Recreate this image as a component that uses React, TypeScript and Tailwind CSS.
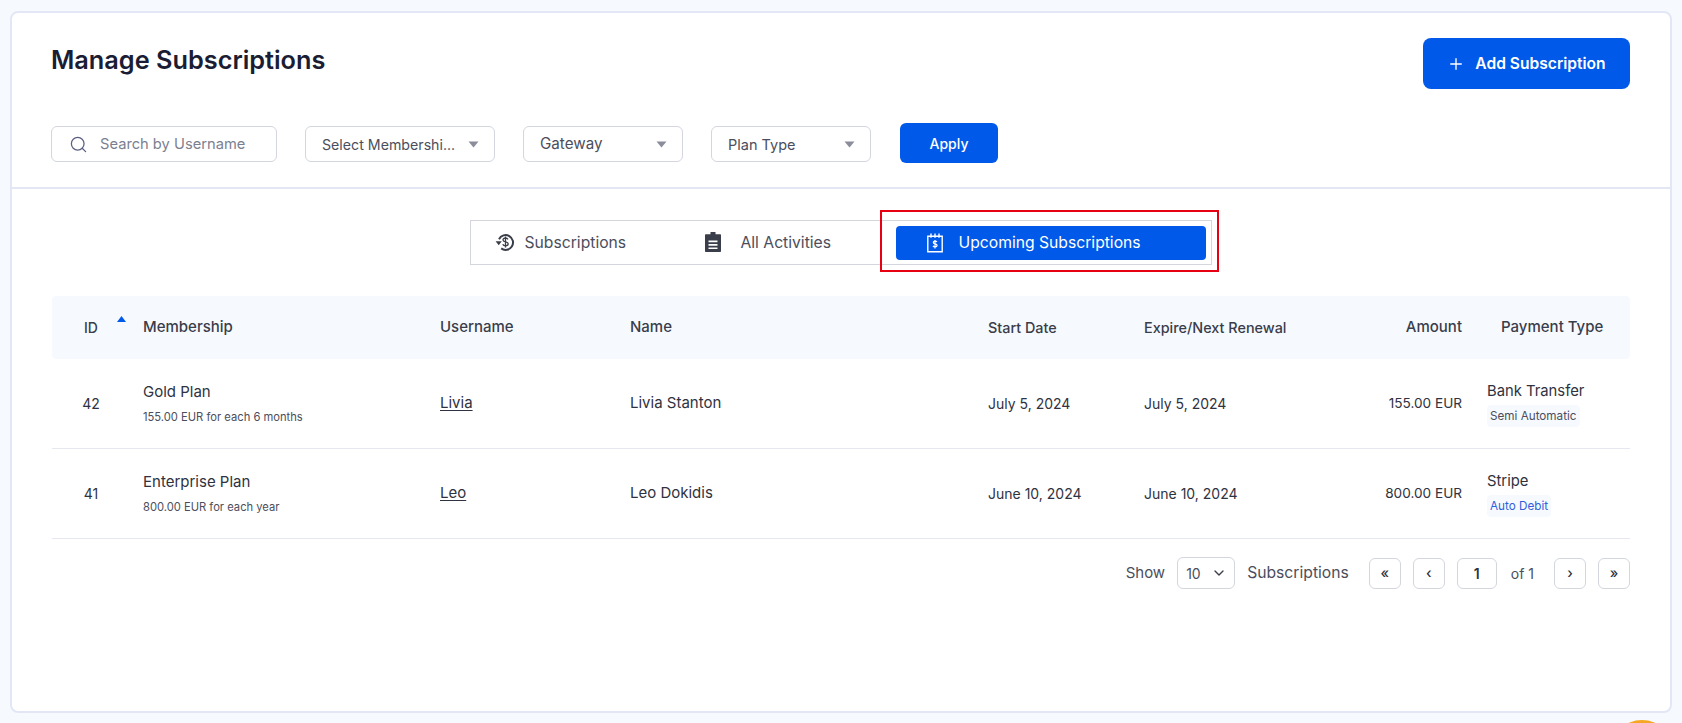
import { ChevronDown, Plus, Search } from 'lucide-react';

const font = "font-['Inter',sans-serif]";

function Caret() {
  return (
    <svg width="11" height="7" viewBox="0 0 11 7" className="shrink-0 text-[#8b8d9b]">
      <path d="M0.5 0.5h10L5.5 6.5z" fill="currentColor" />
    </svg>
  );
}

function FilterSelect({ label, width, size }: { label: string; width: string; size: string }) {
  return (
    <div className={`flex h-9 items-center justify-between rounded-md border border-[#d4d6de] bg-white pl-4 pr-[15px] text-[#4b4e5c] ${width} ${size}`}>
      <span className="pt-px">{label}</span>
      <Caret />
    </div>
  );
}

function SubscriptionsIcon() {
  return (
    <svg width="20" height="20" viewBox="0 0 20 20" fill="none" className="shrink-0 text-[#3a3d4a]">
      <path d="M4 7.2A7.4 7.4 0 1 1 6.2 16.4" stroke="currentColor" strokeWidth="2" />
      <path d="M0.6 9.2h6.2L3.7 13.2z" fill="currentColor" />
      <path d="M13 7.4c-.5-1-1.5-1.4-2.6-1.4-1.3 0-2.4.7-2.4 1.9 0 2.5 5.2 1.2 5.2 3.9 0 1.2-1.2 2-2.7 2-1.2 0-2.3-.5-2.8-1.5M10.5 4.5v11" stroke="currentColor" strokeWidth="1.3" />
    </svg>
  );
}

function ActivitiesIcon() {
  return (
    <svg width="16" height="20" viewBox="0 0 16 20" className="shrink-0 text-[#3a3d4a]">
      <path fillRule="evenodd" fill="currentColor" d="M5.5 0h5v2.2H15c.6 0 1 .4 1 1V19c0 .6-.4 1-1 1H1c-.6 0-1-.4-1-1V3.2c0-.6.4-1 1-1h4.5zM3.5 8.5v1.8h9V8.5zM3.5 12v1.8h9V12zM3.5 15.4v1.6h9v-1.6z" />
    </svg>
  );
}

function UpcomingIcon() {
  return (
    <svg width="16" height="20" viewBox="0 0 16 20" fill="none" stroke="currentColor" className="shrink-0 text-white">
      <path d="M.8 3.2h14.4v15.6H.8z" strokeWidth="1.4" />
      <path d="M4 .6v4.2M8 .6v4.2M12 .6v4.2" strokeWidth="1.4" />
      <path d="M10 9c-.4-.6-1.1-.9-1.9-.9-1 0-1.8.5-1.8 1.4 0 1.9 3.8 1 3.8 3 0 .9-.9 1.4-2 1.4-.9 0-1.7-.3-2.1-1M8 7v8.4" strokeWidth="1.2" />
    </svg>
  );
}

const columns = 'grid grid-cols-[91px_297px_190px_358px_156px_176px_142px_25px_143px] items-center';

const rows = [
  {
    id: '42',
    plan: 'Gold Plan',
    price: '155.00 EUR for each 6 months',
    username: 'Livia',
    name: 'Livia Stanton',
    start: 'July 5, 2024',
    expire: 'July 5, 2024',
    amount: '155.00 EUR',
    gateway: 'Bank Transfer',
    type: 'Semi Automatic',
    typeColor: 'text-[#4b4e5c]',
  },
  {
    id: '41',
    plan: 'Enterprise Plan',
    price: '800.00 EUR for each year',
    username: 'Leo',
    name: 'Leo Dokidis',
    start: 'June 10, 2024',
    expire: 'June 10, 2024',
    amount: '800.00 EUR',
    gateway: 'Stripe',
    type: 'Auto Debit',
    typeColor: 'text-[#2f5fdc]',
  },
];

function PageButton({ label }: { label: string }) {
  return (
    <div className="flex h-[31px] w-8 items-center justify-center rounded-md border border-[#d4d6de] bg-white pb-0.5 text-[14px] font-medium text-[#2f3240]">
      {label}
    </div>
  );
}

export default function App() {
  return (
    <div className={`relative h-[723px] overflow-hidden bg-[#f6faff] px-[10px] pt-[11px] ${font}`}>
      <div className="h-[702px] rounded-lg border-2 border-[#e3e7f5] bg-white">
        {/* Header and filters */}
        <div className="h-[176px] border-b-2 border-[#e3e7f5] pl-[39px] pr-[40px]">
          <div className="flex items-start justify-between pt-[25px]">
            <h1 className="mt-[6px] text-[25.3px] font-semibold leading-8 text-[#1a1d33]">Manage Subscriptions</h1>
            <button className="flex h-[51px] w-[207px] items-center justify-center gap-2.5 rounded-lg bg-[#0059e8] pt-px text-[15.6px] font-semibold text-white">
              <Plus className="h-[18px] w-[18px]" strokeWidth={1.8} />
              Add Subscription
            </button>
          </div>
          <div className="mt-[34px] flex items-center">
            <div className="mt-0.5 flex h-9 w-[226px] items-center rounded-md border border-[#d4d6de] bg-white pl-[17px] text-[14.7px] text-[#7c7f8f]">
              <Search className="mr-[12px] h-[19px] w-[19px] text-[#5c6080]" strokeWidth={1.6} />
              Search by Username
            </div>
            <div className="ml-7 mt-0.5"><FilterSelect label="Select Membershi..." width="w-[190px]" size="text-[14.2px]" /></div>
            <div className="ml-7 mt-0.5"><FilterSelect label="Gateway" width="w-[160px]" size="text-[15.2px]" /></div>
            <div className="ml-7 mt-0.5"><FilterSelect label="Plan Type" width="w-[160px]" size="text-[14.5px]" /></div>
            <button className="ml-[29px] h-10 w-[98px] rounded-md bg-[#0059e8] text-[14px] font-medium text-white">Apply</button>
          </div>
        </div>

        {/* Tabs */}
        <div className="flex justify-center pt-[31px]">
          <div className="relative ml-[-1px] flex h-[45px] w-[742px] items-center border border-[#d4d6de] text-[15.7px] text-[#4b4e5c]">
            <div className="flex w-[216px] items-center pl-[24px]">
              <SubscriptionsIcon />
              <span className="ml-[10px]">Subscriptions</span>
            </div>
            <div className="flex w-[209px] items-center pl-[18px]">
              <ActivitiesIcon />
              <span className="ml-[20px]">All Activities</span>
            </div>
            <div className="flex h-[34px] w-[310px] items-center rounded-[4px] bg-[#0059e8] pl-[31px] text-white">
              <UpcomingIcon />
              <span className="ml-[16px]">Upcoming Subscriptions</span>
            </div>
            <div className="absolute left-[409px] top-[-11px] h-[62px] w-[339px] border-2 border-[#e60012]" />
          </div>
        </div>

        {/* Table */}
        <div className="mx-[40px] mt-[31px]">
          <div className={`${columns} h-[63px] rounded-sm bg-[#f6faff] text-[15px] font-medium text-[#3a3d4a]`}>
            <div className="relative pr-[13px] text-center text-[14px]">
              ID
              <svg width="9" height="6" viewBox="0 0 9 6" className="absolute left-[65px] top-[-1px] text-[#0059e8]">
                <path d="M0 6L4.5 0L9 6z" fill="currentColor" />
              </svg>
            </div>
            <div>Membership</div>
            <div>Username</div>
            <div>Name</div>
            <div className="text-[14.4px]">Start Date</div>
            <div className="text-[14.4px]">Expire/Next Renewal</div>
            <div className="text-right">Amount</div>
            <div />
            <div className="pl-[14px]">Payment Type</div>
          </div>
          {rows.map((row) => (
            <div key={row.id} className={`${columns} h-[90px] border-b border-[#e6e8f0] text-[15px] text-[#2f3240]`}>
              <div className="pr-[13px] text-center text-[14px]">{row.id}</div>
              <div>
                <div>{row.plan}</div>
                <div className="mt-[6px] text-[11.2px] text-[#4b4e5c]">{row.price}</div>
              </div>
              <div className="underline underline-offset-2">{row.username}</div>
              <div>{row.name}</div>
              <div className="text-[14px]">{row.start}</div>
              <div className="text-[14px]">{row.expire}</div>
              <div className="text-right text-[13.6px]">{row.amount}</div>
              <div />
              <div>
                <div className="text-[14.8px]">{row.gateway}</div>
                <div className={`mt-[2px] inline-block rounded bg-[#f6faff] px-[3px] py-1 text-[11.7px] leading-[14px] ${row.typeColor}`}>{row.type}</div>
              </div>
            </div>
          ))}

          {/* Pagination */}
          <div className="mt-[18px] flex items-center justify-end text-[15.7px] text-[#4b4e5c]">
            <span className="text-[15px]">Show</span>
            <div className="ml-[12px] flex h-[32px] w-[58px] items-center justify-between rounded-md border border-[#d4d6de] pl-2 pr-[7px] text-[14px]">
              10
              <ChevronDown className="h-4 w-4 text-[#3a3d4a]" strokeWidth={2} />
            </div>
            <span className="ml-3">Subscriptions</span>
            <div className="ml-5"><PageButton label="«" /></div>
            <div className="ml-[12px]"><PageButton label="‹" /></div>
            <div className="ml-[12px] flex h-[31px] w-10 items-center justify-center rounded-md border border-[#d4d6de] text-[14px] font-semibold text-[#2f3240]">1</div>
            <span className="ml-[14px] mr-[20px] text-[14px]">of 1</span>
            <PageButton label="›" />
            <div className="ml-[12px]"><PageButton label="»" /></div>
          </div>
        </div>
      </div>
      <div className="absolute left-[1610px] top-[720px] h-16 w-16 rounded-full bg-[#f5a623]" />
    </div>
  );
}
